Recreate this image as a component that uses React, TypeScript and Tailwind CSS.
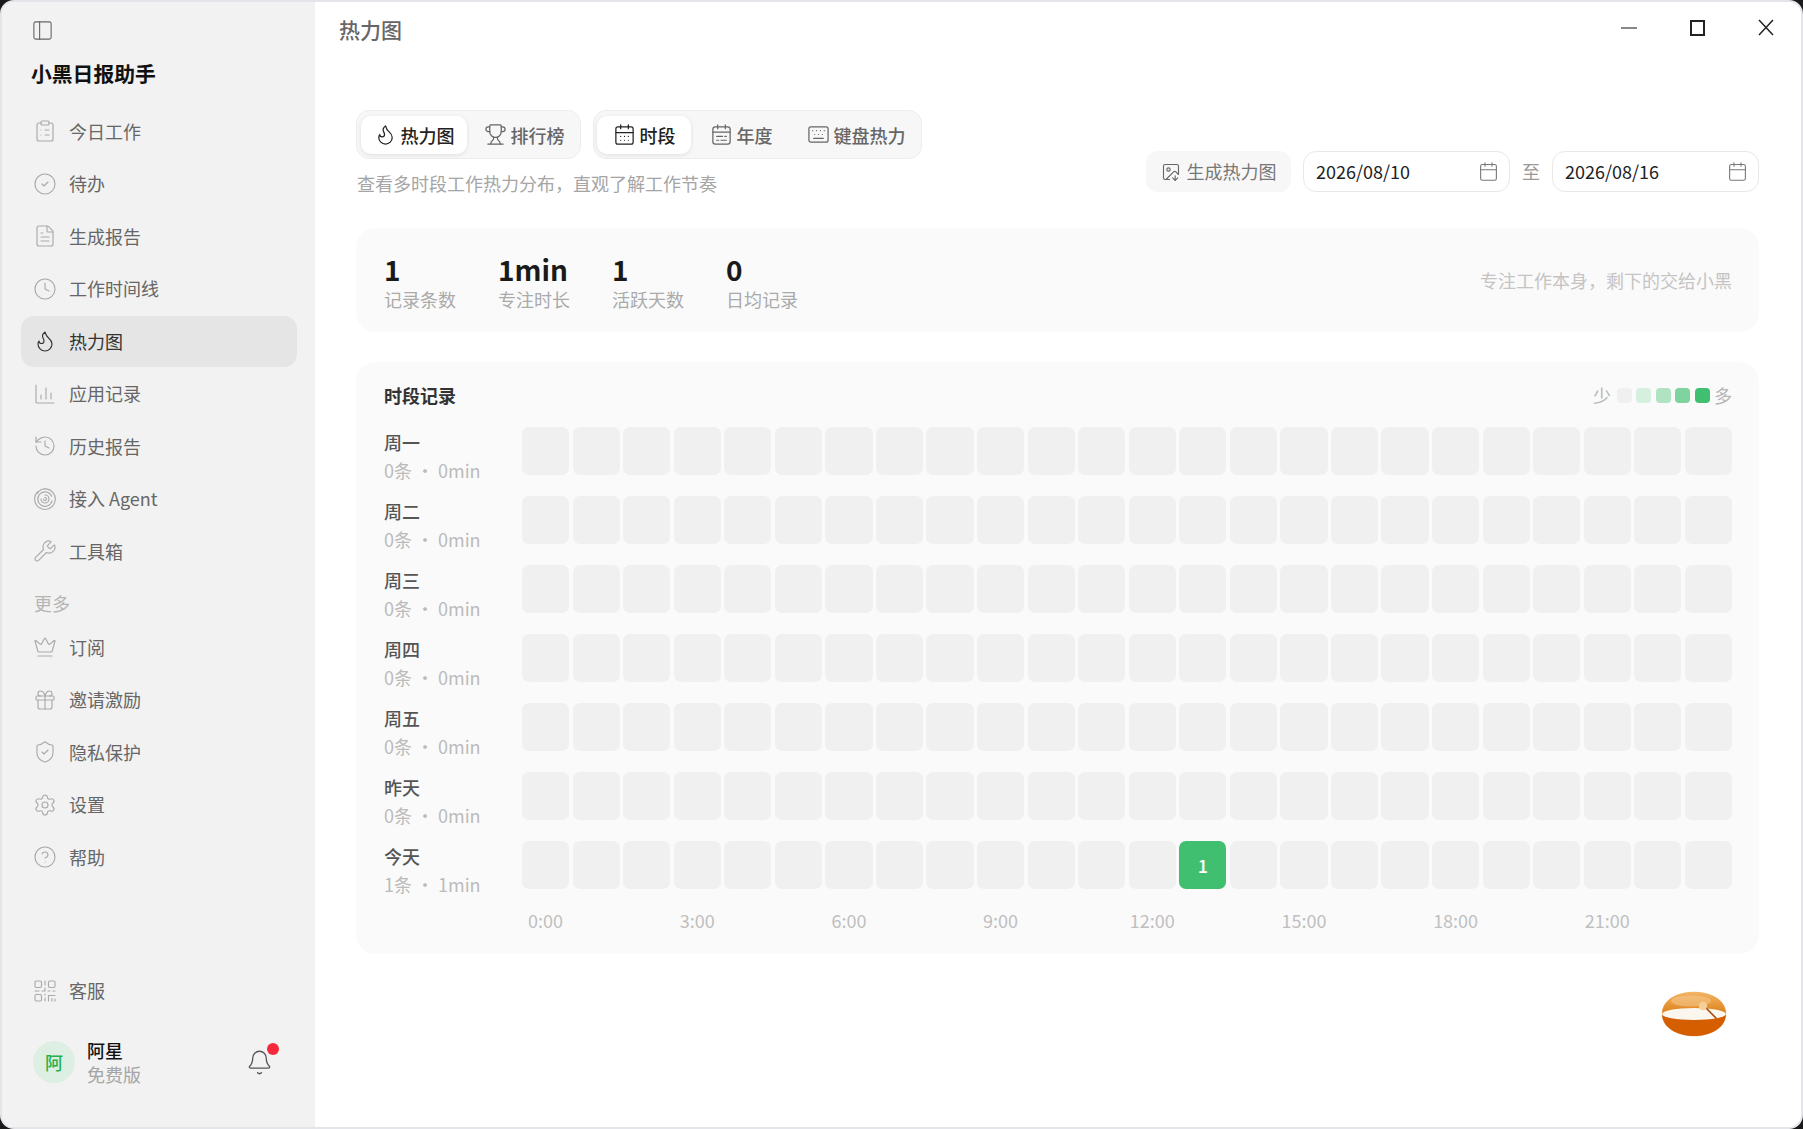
import React from "react";
import {
  PanelLeft, ClipboardList, CircleCheck, FileText, Clock, Flame, History, Wrench, Crown, Gift,
  ShieldCheck, Settings, CircleHelp, Bell, Trophy, CalendarDays, Calendar, Keyboard, ImageDown,
} from "lucide-react";

type IC = (p: { size?: number; strokeWidth?: number; className?: string }) => React.ReactElement;

const Bars: IC = ({ size = 22, strokeWidth = 1.3, className }) => (
  <svg width={size} height={size} viewBox="0 0 24 24" fill="none" stroke="currentColor" strokeWidth={strokeWidth} strokeLinecap="round" className={className}>
    <path d="M3 3v17a1 1 0 0 0 1 1h17" />
    <path d="M8 17v-4" /><path d="M13 17V6" /><path d="M18 17v-6" />
  </svg>
);
const Spiral: IC = ({ size = 22, strokeWidth = 1.3, className }) => (
  <svg width={size} height={size} viewBox="0 0 24 24" fill="none" stroke="currentColor" strokeWidth={strokeWidth} strokeLinecap="round" className={className}>
    <path d="M5 4.5A10.3 10.3 0 1 0 12 1.8" />
    <path d="M12 1.8C8.5 1.8 5 4 4.6 6.5" />
    <path d="M18.6 9.2A7.2 7.2 0 1 0 19 13.8" />
    <path d="M8 12a4 4 0 1 0 4-4" />
    <path d="M12 10.6a1.5 1.5 0 1 1-1.5 1.5" />
  </svg>
);
const Qr: IC = ({ size = 22, strokeWidth = 1.3, className }) => (
  <svg width={size} height={size} viewBox="0 0 24 24" fill="none" stroke="currentColor" strokeWidth={strokeWidth} strokeLinecap="round" className={className}>
    <rect x="2" y="2" width="6.5" height="6.5" rx="1.2" />
    <rect x="15.5" y="2" width="6.5" height="6.5" rx="1.2" />
    <rect x="2" y="15.5" width="6.5" height="6.5" rx="1.2" />
    <path d="M12 2v4M12 9v3M2 12h4M9 12h3M15 12h2M20 12h2M12 15v1M12 19v3M15.5 22v-5.5H22M19 22v-2.5M22 22v-2" />
  </svg>
);
const CalendarYear: IC = ({ size = 20, strokeWidth = 1.4, className }) => (
  <svg width={size} height={size} viewBox="0 0 24 24" fill="none" stroke="currentColor" strokeWidth={strokeWidth} strokeLinecap="round" className={className}>
    <rect x="3" y="4" width="18" height="18" rx="2.5" />
    <path d="M8 2v4M16 2v4M3 9.5h18M7 14h6M15.5 14H17M7 18h2M11.5 18H17" />
  </svg>
);

const top: [IC, string][] = [
  [ClipboardList as IC, "今日工作"],
  [CircleCheck as IC, "待办"],
  [FileText as IC, "生成报告"],
  [Clock as IC, "工作时间线"],
  [Flame as IC, "热力图"],
  [Bars, "应用记录"],
  [History as IC, "历史报告"],
  [Spiral, "接入 Agent"],
  [Wrench as IC, "工具箱"],
];
const more: [IC, string][] = [
  [Crown as IC, "订阅"],
  [Gift as IC, "邀请激励"],
  [ShieldCheck as IC, "隐私保护"],
  [Settings as IC, "设置"],
  [CircleHelp as IC, "帮助"],
];

function NavItem({ Icon, label }: { Icon: IC; label: string }) {
  const active = label === "热力图";
  return (
    <div className={`flex h-[51px] items-center gap-[12px] rounded-[13px] px-[12px] text-[18px] ${active ? "bg-[#e5e5e5] text-[#333333]" : "text-[#666666]"}`}>
      <Icon size={24} strokeWidth={1.15} className={active ? "text-[#333333]" : "text-[#aaaaaa]"} />
      <span>{label}</span>
    </div>
  );
}

function Tab({ Icon, label, active, px }: { Icon: IC; label: string; active?: boolean; px: string }) {
  return (
    <div className={`flex h-[38px] items-center gap-[4px] rounded-[10px] text-[18px] font-medium ${px} ${active ? "bg-white text-[#222222] shadow-[0_1px_4px_rgba(0,0,0,0.10)]" : "text-[#666666]"}`}>
      <Icon size={23} strokeWidth={1.3} className="shrink-0" />
      <span className="pt-[1px]">{label}</span>
    </div>
  );
}

function DateBox({ value }: { value: string }) {
  return (
    <div className="flex h-[41px] w-[207px] items-center justify-between rounded-[13px] border border-[#e8e8e8] bg-white pl-[12px] pr-[10px] text-[18px] text-[#222222]">
      <span>{value}</span>
      <Calendar size={21} strokeWidth={1.25} className="text-[#777777]" />
    </div>
  );
}

function Stat({ n, label }: { n: string; label: string }) {
  return (
    <div className="mt-[3px] w-[72px]">
      <div className="h-[34px] whitespace-nowrap text-[28px] font-bold leading-[34px] text-[#1a1a1a]">{n}</div>
      <div className="whitespace-nowrap text-[18px] leading-[26px] text-[#aaaaaa]">{label}</div>
    </div>
  );
}

const rows: [string, string, string][] = [
  ["周一", "0条", "0min"],
  ["周二", "0条", "0min"],
  ["周三", "0条", "0min"],
  ["周四", "0条", "0min"],
  ["周五", "0条", "0min"],
  ["昨天", "0条", "0min"],
  ["今天", "1条", "1min"],
];
const hours = Array.from({ length: 24 }, (_, i) => i);

function Mascot() {
  return (
    <svg width="70" height="50" viewBox="0 0 70 50" className="absolute left-[1659px] top-[989px]">
      <defs>
        <linearGradient id="mTop" x1="0" y1="0" x2="0" y2="1">
          <stop offset="0" stopColor="#f2b565" />
          <stop offset="1" stopColor="#dd7f18" />
        </linearGradient>
        <filter id="mGlow" x="-20%" y="-20%" width="140%" height="140%">
          <feGaussianBlur stdDeviation="0.7" />
        </filter>
      </defs>
      <ellipse cx="35" cy="25" rx="32.5" ry="22.5" fill="#f5c58a" opacity="0.6" filter="url(#mGlow)" />
      <path d="M3 25C3 11 17 3 35 3s32 8 32 22z" fill="url(#mTop)" />
      <path d="M3 25c0 13 14 22 32 22s32-9 32-22z" fill="#d55f00" />
      <ellipse cx="35" cy="25" rx="32" ry="6" fill="#fbf6ee" />
      <ellipse cx="32" cy="12" rx="20" ry="5.5" fill="#f6cb8e" opacity="0.55" />
      <path d="M45 17l12 12" stroke="#a84a05" strokeWidth="1.6" strokeLinecap="round" />
      <circle cx="44" cy="17" r="4.2" fill="#f6cf98" />
    </svg>
  );
}

export default function App() {
  return (
    <div className="relative h-[1129px] w-[1803px] overflow-hidden bg-[#1a1a1a] [font-family:'Noto_Sans_CJK_SC','Noto_Sans',sans-serif]">
      <div className="flex h-full w-full overflow-hidden rounded-[14px] border-2 border-[#e3e5ea] bg-white">
        {/* Sidebar */}
        <aside className="flex w-[313px] shrink-0 flex-col bg-[#f2f2f2] pb-[37px] pl-[19px] pr-[18px]">
          <div className="flex h-[56px] items-center pl-[10px]">
            <PanelLeft size={23} strokeWidth={1.15} className="text-[#666666]" />
          </div>
          <div className="flex h-[32px] items-center pl-[10px] text-[20.8px] font-bold text-[#111111]">小黑日报助手</div>
          <nav className="mt-[15.5px] flex flex-col gap-[1.5px]">
            {top.map(([I, l]) => <NavItem key={l} Icon={I} label={l} />)}
          </nav>
          <div className="flex h-[45px] items-center pl-[13px] pt-[8px] text-[18px] text-[#b5b5b5]">更多</div>
          <div className="flex flex-col gap-[1.5px]">
            {more.map(([I, l]) => <NavItem key={l} Icon={I} label={l} />)}
          </div>
          <div className="flex-1" />
          <NavItem Icon={Qr} label="客服" />
          <div className="mt-[18px] flex h-[56px] items-center pl-[12px] pr-[24px]">
            <div className="flex h-[42px] w-[42px] items-center justify-center rounded-full bg-[#dcefe2] text-[18px] font-medium text-[#22b14c]">阿</div>
            <div className="ml-[12px] flex-1 text-[18px] leading-[24px]">
              <div className="font-medium text-[#111111]">阿星</div>
              <div className="text-[#a5a5a5]">免费版</div>
            </div>
            <div className="relative">
              <Bell size={27} strokeWidth={1.15} className="text-[#555555]" />
              <span className="absolute right-[-6px] top-[-6px] h-[12px] w-[12px] rounded-full bg-[#f5293c]" />
            </div>
          </div>
        </aside>

        {/* Main */}
        <main className="flex min-w-0 flex-1 flex-col pl-[41px] pr-[42px]">
          <header className="relative flex h-[56px] items-center">
            <div className="ml-[-17px] text-[21px] font-medium text-[#666666]">热力图</div>
            <div className="mb-[5px] ml-auto mr-[-15px] flex items-center gap-[53px]">
              <div className="h-[2px] w-[16px] bg-[#888888]" />
              <div className="h-[16px] w-[15px] border-2 border-[#222222]" />
              <svg width="16" height="17" viewBox="0 0 16 17" fill="none" stroke="#222222" strokeWidth="1.5"><path d="M1 1l14 15M15 1L1 16" /></svg>
            </div>
          </header>

          <div className="mt-[52px] flex items-end justify-between">
            <div>
              <div className="flex gap-[12px]">
                <div className="flex h-[49px] items-center gap-[4px] rounded-[13px] border border-[#ededed] bg-[#f7f7f7] pl-[4px] pr-[3px]">
                  <Tab Icon={Flame as IC} label="热力图" active px="px-[12.5px]" />
                  <Tab Icon={Trophy as IC} label="排行榜" px="px-[12.5px]" />
                </div>
                <div className="flex h-[49px] items-center gap-[3px] rounded-[13px] border border-[#ededed] bg-[#f7f7f7] pl-[3px]">
                  <Tab Icon={CalendarDays as IC} label="时段" active px="px-[15.5px]" />
                  <Tab Icon={CalendarYear} label="年度" px="px-[15.5px]" />
                  <Tab Icon={Keyboard as IC} label="键盘热力" px="px-[15.5px]" />
                </div>
              </div>
              <div className="ml-[1px] mt-[11px] text-[18px] leading-[26px] text-[#a5a5a5]">查看多时段工作热力分布，直观了解工作节奏</div>
            </div>
            <div className="mb-[4px] flex items-center">
              <div className="flex h-[41px] w-[145px] items-center justify-center gap-[6px] rounded-[12px] bg-[#f7f7f7] text-[18px] text-[#777777]">
                <ImageDown size={20} strokeWidth={1.35} className="text-[#666666]" />
                <span>生成热力图</span>
              </div>
              <div className="ml-[12px]"><DateBox value="2026/08/10" /></div>
              <div className="w-[42px] text-center text-[18px] text-[#999999]">至</div>
              <DateBox value="2026/08/16" />
            </div>
          </div>

          <section className="mt-[32px] flex h-[104px] items-center gap-[42px] rounded-[20px] bg-[#fafafa] px-[28px]">
            <Stat n="1" label="记录条数" />
            <Stat n="1min" label="专注时长" />
            <Stat n="1" label="活跃天数" />
            <Stat n="0" label="日均记录" />
            <div className="ml-auto mr-[-1px] text-[18px] text-[#c4c4c4]">专注工作本身，剩下的交给小黑</div>
          </section>

          <section className="mt-[30px] rounded-[20px] bg-[#fafafa] pb-[22px] pl-[28px] pr-[27px] pt-[21px]">
            <div className="flex h-[24px] items-center justify-between">
              <div className="text-[18px] font-bold text-[#333333]">时段记录</div>
              <div className="flex items-center gap-[4.5px] text-[18px] text-[#b5b5b5]">
                <span className="mr-[1px]">少</span>
                <span className="h-[15px] w-[15px] rounded-[4px] bg-[#f0f0f0]" />
                <span className="h-[15px] w-[15px] rounded-[4px] bg-[#d6f0df]" />
                <span className="h-[15px] w-[15px] rounded-[4px] bg-[#afe3c2]" />
                <span className="h-[15px] w-[15px] rounded-[4px] bg-[#7fd39e]" />
                <span className="h-[15px] w-[15px] rounded-[4px] bg-[#40bf70]" />
                <span>多</span>
              </div>
            </div>
            <div className="mt-[20px] flex flex-col gap-[21px]">
              {rows.map(([d, c, m]) => (
                <div key={d} className="flex h-[48px]">
                  <div className="w-[138px] shrink-0 pt-[1px] text-[18px] leading-[28px]">
                    <div className="font-medium text-[#555555]">{d}</div>
                    <div className="whitespace-nowrap text-[#bbbbbb]">{c}<span className="mx-[4px]">·</span>{m}</div>
                  </div>
                  <div className="grid flex-1 grid-cols-24 gap-[3.4px]">
                    {hours.map((h) =>
                      d === "今天" && h === 13 ? (
                        <div key={h} className="flex items-center justify-center rounded-[7px] bg-[#40bf70] text-[18px] font-medium text-white">1</div>
                      ) : (
                        <div key={h} className="rounded-[7px] bg-[#f0f0f0]" />
                      )
                    )}
                  </div>
                </div>
              ))}
            </div>
            <div className="mt-[19px] flex">
              <div className="w-[138px] shrink-0" />
              <div className="grid flex-1 grid-cols-24 gap-[3.4px] text-[18px] leading-[24px] text-[#bfbfbf]">
                {hours.map((h) => (
                  <div key={h} className="whitespace-nowrap text-center">{h % 3 === 0 ? `${h}:00` : ""}</div>
                ))}
              </div>
            </div>
          </section>
        </main>
      </div>
      <Mascot />
    </div>
  );
}
